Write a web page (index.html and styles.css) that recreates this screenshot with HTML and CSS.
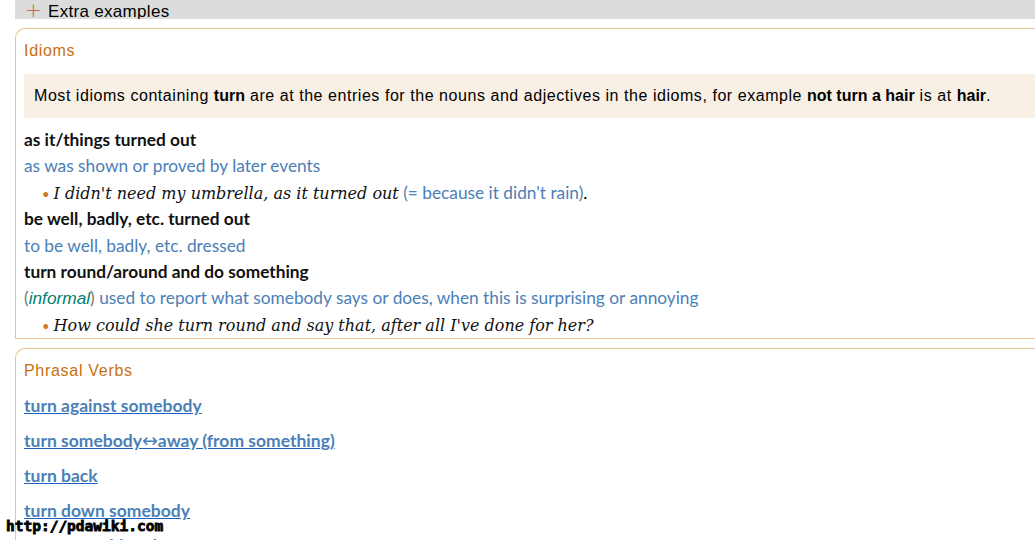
FILE: index.html
```html
<!DOCTYPE html>
<html>
<head>
<meta charset="utf-8">
<link rel="stylesheet" href="styles.css">
</head>
<body>
<div class="extra"><span class="plus">+</span> Extra examples</div>

<div class="box">
  <div class="heading">Idioms</div>
  <div class="note">Most idioms containing <b>turn</b> are at the entries for the nouns and adjectives in the idioms, for example <b>not turn a hair</b> is at <b>hair</b>.</div>
  <div class="entries">
    <div class="idm">as it/things turned out</div>
    <div class="def">as was shown or proved by later events</div>
    <div class="ex"><span class="bullet">•</span><i>I didn't need my umbrella, as it turned out</i> <span class="gloss">(= because it didn't rain)</span>.</div>
    <div class="idm">be well, badly, etc. turned out</div>
    <div class="def">to be well, badly, etc. dressed</div>
    <div class="idm">turn round/around and do something</div>
    <div class="def"><span class="paren">(</span><span class="reg">informal</span><span class="paren">)</span> used to report what somebody says or does, when this is surprising or annoying</div>
    <div class="ex"><span class="bullet">•</span><i>How could she turn round and say that, after all I've done for her?</i></div>
  </div>
</div>

<div class="box">
  <div class="heading">Phrasal Verbs</div>
  <div class="pv">
    <a href="#">turn against somebody</a>
    <a href="#">turn somebody<span class="arrow">↔</span>away (from something)</a>
    <a href="#">turn back</a>
    <a href="#">turn down somebody</a>
    <a href="#">turn something down</a>
  </div>
</div>

<div class="watermark">http://pdawiki.com</div>
</body>
</html>
```

FILE: styles.css
```css
html, body {
  margin: 0;
  padding: 0;
  background: #fff;
  overflow: hidden;
  height: 540px;
}
body {
  font-family: "Liberation Sans", Arial, sans-serif;
  color: #000;
}
.extra {
  margin-left: 15px;
  height: 19px;
  overflow: hidden;
  background: #dcdcdc;
  font-size: 17px;
  letter-spacing: 0.3px;
  line-height: 22px;
  padding-left: 10px;
  white-space: nowrap;
}
.plus {
  color: #c96a45;
  font-family: "DejaVu Sans", sans-serif;
  font-size: 20px;
  font-weight: 200;
  line-height: 1;
  margin-right: 1px;
}
.box {
  margin-left: 15px;
  margin-top: 9px;
  border: 1px solid #ecc48f;
  border-right: none;
  border-radius: 10px 0 0 0;
  padding: 12px 0 0 8px;
}
.heading {
  color: #c8700f;
  font-size: 16px;
  letter-spacing: 0.7px;
  line-height: 20px;
}
.note {
  margin-top: 13px;
  background: #f8efe5;
  padding: 13px 10px;
  font-size: 16px;
  letter-spacing: 0.55px;
  line-height: 18px;
  white-space: nowrap;
}
.note b { font-weight: bold; letter-spacing: 0; }
.entries {
  margin-top: 9px;
  font-family: Lato, sans-serif;
  font-size: 17.3px;
  line-height: 26.4px;
}
.entries > div {
  height: 26.4px;
  white-space: nowrap;
}
.idm {
  font-weight: bold;
  color: #111;
}
.def {
  color: #4b80b7;
}
.paren { color: #777; }
.reg {
  color: #00806f;
  font-style: italic;
  font-family: "Liberation Sans", Arial, sans-serif;
  line-height: 1;
}
.ex {
  padding-left: 18px;
}
.ex i {
  font-family: "DejaVu Serif", serif;
  font-size: 16px;
  font-style: italic;
  color: #111;
  line-height: 1;
}
.bullet {
  color: #d07a1a;
  font-size: 13px;
  line-height: 1;
  margin-right: 4px;
}
.gloss { color: #4b80b7; }
.pv {
  margin-top: 7px;
  font-family: Lato, sans-serif;
  font-size: 17.5px;
  line-height: 35px;
}
.pv a {
  display: block;
  height: 35px;
  color: #4b80b7;
  font-weight: bold;
  text-decoration: underline;
  text-decoration-color: #1f5fbf;
  white-space: nowrap;
}
.arrow {
  font-family: "DejaVu Sans", sans-serif;
  font-weight: normal;
  font-size: 19px;
  line-height: 0;
}
.watermark {
  position: absolute;
  left: 6px;
  top: 517px;
  font-family: "DejaVu Sans Mono", monospace;
  font-weight: bold;
  font-size: 14.5px;
  line-height: 18px;
  color: #000;
  -webkit-text-stroke: 0.8px #000;
  text-shadow: 0 0 1px #fff;
}
```
